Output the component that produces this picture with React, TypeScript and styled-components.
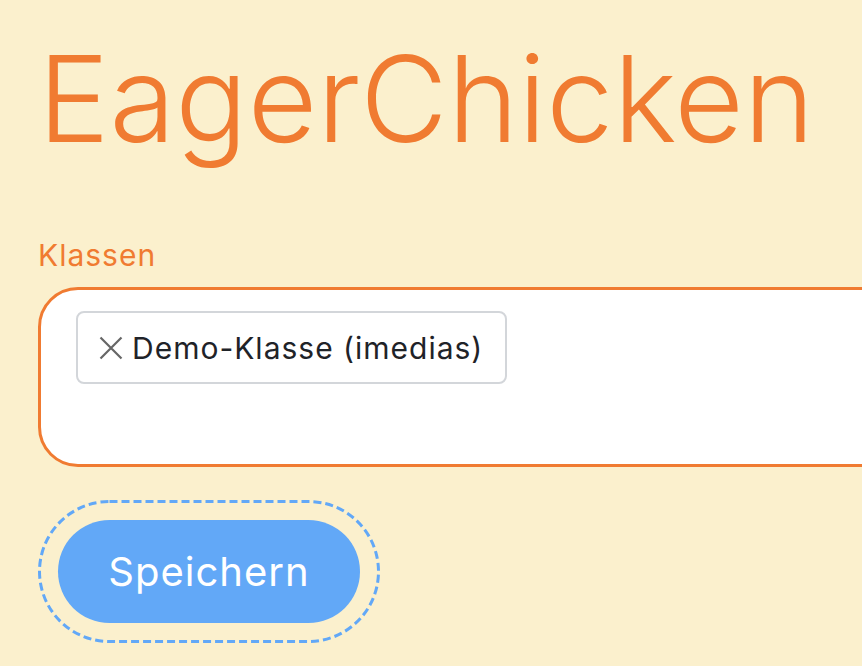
import React from "react";
import styled, { createGlobalStyle } from "styled-components";

const GlobalStyle = createGlobalStyle`
  html, body {
    margin: 0;
    padding: 0;
    background: #fbf0cd;
    overflow: hidden;
  }
  body {
    font-family: Inter, "Noto Sans", sans-serif;
  }
`;

const Page = styled.main`
  min-height: 666px;
  box-sizing: border-box;
  padding: 39px 0 0 38px;
  overflow: hidden;
`;

const Title = styled.h1`
  margin: 0;
  font-family: Inter, sans-serif;
  font-weight: 300;
  font-size: 120px;
  line-height: 120px;
  color: #f07b31;
`;

const Form = styled.form`
  margin-top: 78px;
  display: flex;
  flex-direction: column;
  align-items: flex-start;
`;

const Label = styled.label`
  font-size: 30px;
  line-height: 36px;
  letter-spacing: 1px;
  color: #f07b31;
  font-weight: 400;
`;

const TagBox = styled.div`
  margin-top: 14px;
  width: 1000px;
  height: 180px;
  box-sizing: border-box;
  border: 3px solid #f07b31;
  border-radius: 40px;
  background: #ffffff;
  padding: 21px 35px;
  display: flex;
  align-items: flex-start;
  gap: 10px;
`;

const Chip = styled.span`
  display: inline-flex;
  align-items: center;
  gap: 8px;
  height: 73px;
  box-sizing: border-box;
  padding: 0 22px 0 20px;
  border: 2px solid #d3d6da;
  border-radius: 8px;
  background: #ffffff;
  font-size: 30px;
  letter-spacing: 1px;
  color: #1f2328;
`;

const RemoveButton = styled.button`
  display: inline-flex;
  align-items: center;
  justify-content: center;
  padding: 0;
  margin: 0;
  border: none;
  background: none;
  width: 26px;
  height: 26px;
  cursor: pointer;
`;

const SaveButton = styled.button`
  position: relative;
  margin: 53px 0 0 20px;
  width: 302px;
  height: 103px;
  border: none;
  border-radius: 52px;
  background: #62a8f7;
  color: #ffffff;
  font-family: Inter, sans-serif;
  font-size: 40px;
  letter-spacing: 1px;
  font-weight: 400;
  outline: none;
  cursor: pointer;
`;

const FocusRing = styled.svg`
  position: absolute;
  left: -20px;
  top: -20px;
  width: 342px;
  height: 143px;
  pointer-events: none;
  overflow: visible;
`;

export default function App() {
  return (
    <>
      <GlobalStyle />
      <Page>
        <Title>EagerChicken</Title>
        <Form onSubmit={(e) => e.preventDefault()}>
          <Label>Klassen</Label>
          <TagBox>
            <Chip>
              <RemoveButton type="button" aria-label="Entfernen">
                <svg width="24" height="24" viewBox="0 0 24 24">
                  <path d="M1.5 1.5 L22.5 22.5 M22.5 1.5 L1.5 22.5" stroke="#666" strokeWidth="2.2" fill="none" />
                </svg>
              </RemoveButton>
              Demo-Klasse (imedias)
            </Chip>
          </TagBox>
          <SaveButton type="submit">
            Speichern
            <FocusRing viewBox="0 0 342 143" aria-hidden="true">
              <rect
                x="1.5"
                y="1.5"
                width="339"
                height="140"
                rx="70"
                ry="70"
                fill="none"
                stroke="#62a8f7"
                strokeWidth="3"
                strokeDasharray="8 4"
              />
            </FocusRing>
          </SaveButton>
        </Form>
      </Page>
    </>
  );
}
